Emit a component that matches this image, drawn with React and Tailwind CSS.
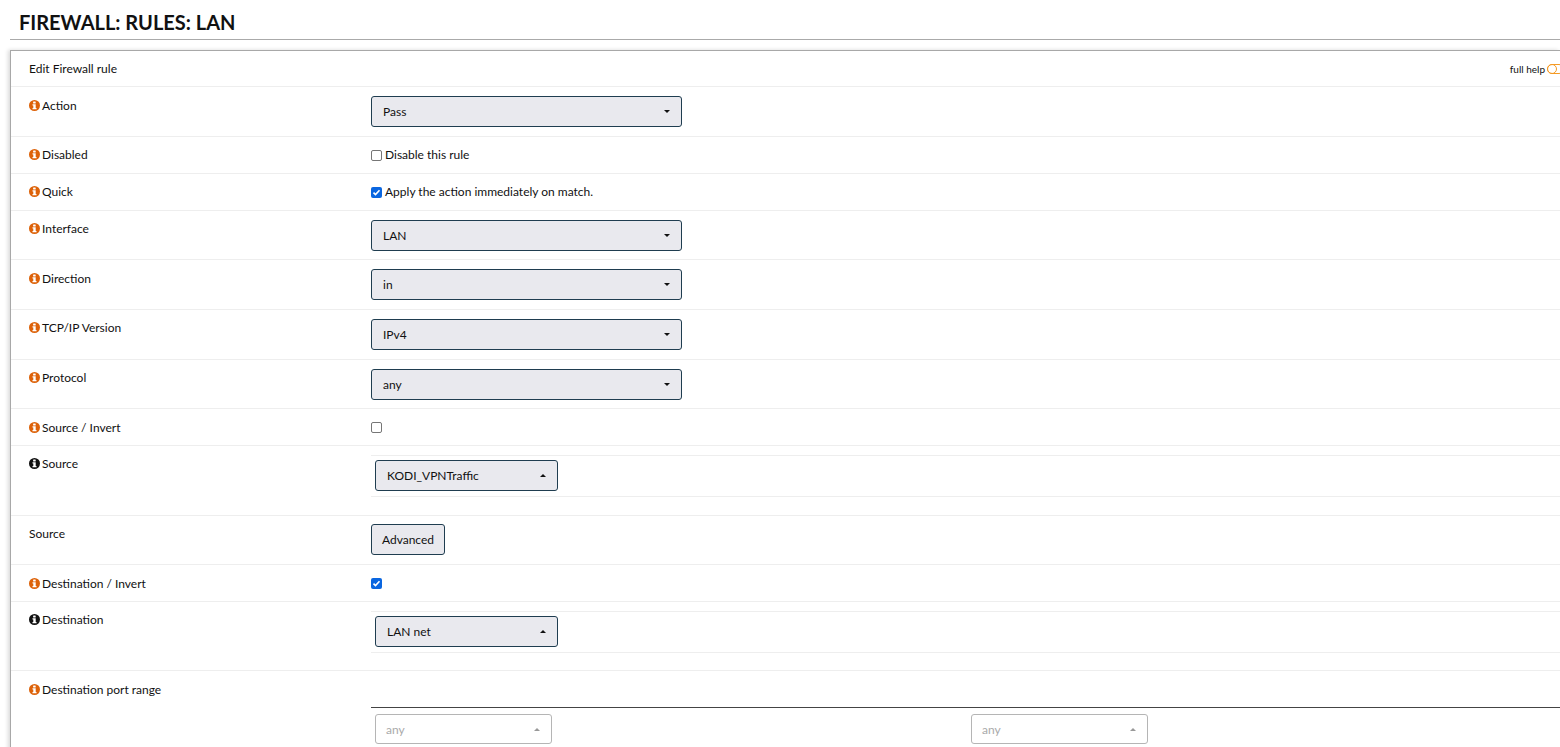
import React from "react";

const font = "font-['Lato',sans-serif]";

function InfoIcon({ color = "#dd6209" }) {
  return (
    <svg width="11" height="11" viewBox="0 0 11 11" className="shrink-0">
      <circle cx="5.5" cy="5.5" r="5.5" fill={color} />
      <rect x="4.1" y="1.6" width="2.6" height="2" rx="0.5" fill="#fff" />
      <path d="M3.5 4.3h3.2v3.7h.8v1.3H3.5V8h.8V5.6h-.8z" fill="#fff" />
    </svg>
  );
}

function Caret({ up, muted }) {
  return (
    <span
      className={`w-0 h-0 border-x-[3.5px] border-x-transparent ${
        up
          ? `border-b-[3.5px] ${muted ? "border-b-[#999]" : "border-b-[#111]"}`
          : "border-t-[3.5px] border-t-[#111]"
      }`}
    />
  );
}

function Select({ value, width = "w-[311px]", up }) {
  return (
    <div
      className={`${width} h-[31px] flex items-center justify-between pl-[11px] pr-[11px] bg-[#e9e9ee] border border-[#1f3d50] rounded-[3px] text-[12px] text-[#111]`}
    >
      <span>{value}</span>
      <Caret up={up} />
    </div>
  );
}

function DisabledSelect() {
  return (
    <div className="w-[177px] h-[30px] flex items-center justify-between pl-[10px] pr-[11px] bg-white border border-[#b5b5b5] rounded-[3px] text-[12px] text-[#aaa]">
      <span className="pt-[1px]">any</span>
      <Caret up muted />
    </div>
  );
}

function Checkbox({ checked }) {
  return checked ? (
    <span className="w-[11px] h-[11px] shrink-0 rounded-[2px] bg-[#0a66e0] flex items-center justify-center">
      <svg width="9" height="9" viewBox="0 0 9 9" fill="none">
        <path d="M1.5 4.6l2 2 4-4.4" stroke="#fff" strokeWidth="1.6" />
      </svg>
    </span>
  ) : (
    <span className="w-[11px] h-[11px] shrink-0 rounded-[2px] bg-white border border-[#767676]" />
  );
}

function Row({ label, icon = "orange", height, labelTop = "pt-[10px]", valueTop, children }) {
  return (
    <div className={`flex border-b border-[#eeeeee] ${height}`}>
      <div className={`w-[360px] shrink-0 pl-[18px] ${labelTop} flex items-start gap-[2px] text-[12px] leading-[16px] text-[#111]`}>
        {icon === "orange" && <span className="mt-[2px]"><InfoIcon /></span>}
        {icon === "black" && <span className="mt-[2px]"><InfoIcon color="#111" /></span>}
        <span>{label}</span>
      </div>
      <div className={`flex-1 ${valueTop}`}>{children}</div>
    </div>
  );
}

function CheckRow({ label, checked, text, labelTop }) {
  return (
    <Row label={label} height="h-[37px]" labelTop={labelTop} valueTop="pt-[11px]">
      <div className="flex items-center gap-[3px] h-[14px] text-[12px] leading-[14px] text-[#111]">
        <Checkbox checked={checked} />
        {text && <span>{text}</span>}
      </div>
    </Row>
  );
}

function SelectRow({ label, value, height = "h-[50px]", labelTop }) {
  return (
    <Row label={label} height={height} labelTop={labelTop} valueTop="pt-[9px]">
      <Select value={value} />
    </Row>
  );
}

function AliasRow({ label, value, height }) {
  return (
    <Row label={label} icon="black" height={height} valueTop="pt-[9px]">
      <div className="border-y border-[#eeeeee] h-[42px] pl-[4px] pt-[4px]">
        <Select value={value} width="w-[183px]" up />
      </div>
    </Row>
  );
}

export default function App() {
  return (
    <div className={`h-screen overflow-hidden bg-white ${font}`}>
      <div className="ml-[10px] h-[40px] border-b border-[#aaaaaa] pl-[9px] pt-[8px] text-[20px] leading-[28px] font-bold text-[#111] whitespace-nowrap">
        FIREWALL: RULES: LAN
      </div>

      <div className="ml-[10px] mt-[10px] border-l border-t border-[#a8a8a8] shadow-[-2px_0_4px_rgba(0,0,0,0.15)]">
        <div className="h-[36px] flex items-center justify-between pl-[18px] pt-[1px] border-b border-[#eeeeee] text-[12px] text-[#111]">
          <span>Edit Firewall rule</span>
          <span className="flex items-center gap-[2px] text-[10px]">
            full help
            <svg width="13" height="10" viewBox="0 0 13 10" fill="none" stroke="#f59a23" strokeWidth="1">
              <rect x="0.5" y="0.5" width="16" height="9" rx="4.5" />
              <circle cx="5" cy="5" r="4.5" />
            </svg>
          </span>
        </div>

        <SelectRow label="Action" value="Pass" labelTop="pt-[11px]" />
        <CheckRow label="Disabled" text="Disable this rule" />
        <CheckRow label="Quick" checked text="Apply the action immediately on match." />
        <SelectRow label="Interface" value="LAN" height="h-[49px]" />
        <SelectRow label="Direction" value="in" labelTop="pt-[11px]" />
        <SelectRow label="TCP/IP Version" value="IPv4" />
        <SelectRow label="Protocol" value="any" height="h-[49px]" />
        <CheckRow label="Source / Invert" labelTop="pt-[11px]" />
        <AliasRow label="Source" value="KODI_VPNTraffic" height="h-[70px]" />

        <Row label="Source" icon="none" height="h-[49px]" valueTop="pt-[8px]">
          <div className="w-[74px] h-[31px] flex items-center justify-center bg-[#e9e9ee] border border-[#1f3d50] rounded-[3px] text-[12px] text-[#111]">
            Advanced
          </div>
        </Row>

        <CheckRow label="Destination / Invert" checked labelTop="pt-[11px]" />
        <AliasRow label="Destination" value="LAN net" height="h-[69px]" />

        <div className="flex pb-[20px]">
          <div className="w-[360px] shrink-0 pl-[18px] pt-[11px] flex items-start gap-[2px] text-[12px] leading-[16px] text-[#111]">
            <span className="mt-[2px]"><InfoIcon /></span>
            <span>Destination port range</span>
          </div>
          <div className="flex-1 pt-[36px]">
            <div className="border-t border-[#444444] pt-[6px] pl-[4px] grid grid-cols-[596px_1fr]">
              <DisabledSelect />
              <DisabledSelect />
            </div>
          </div>
        </div>
      </div>
    </div>
  );
}
